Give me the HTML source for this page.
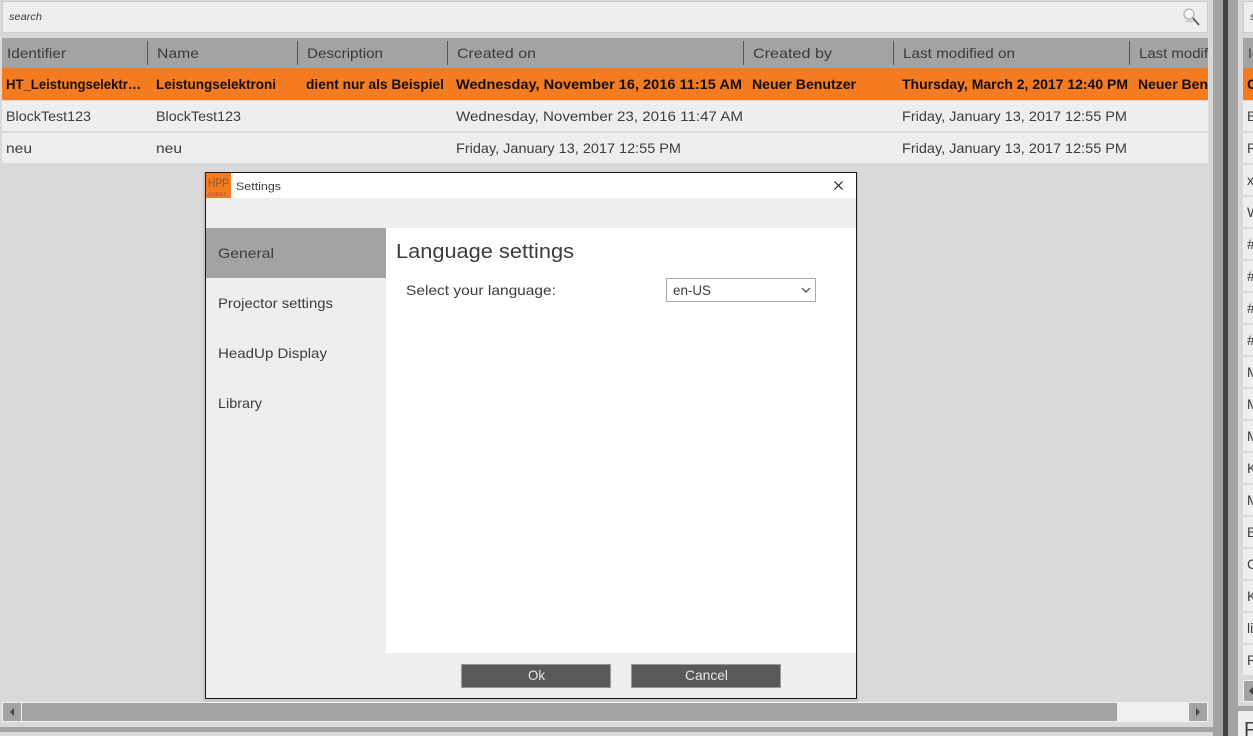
<!DOCTYPE html>
<html lang="en">
<head>
<meta charset="utf-8">
<title>Settings</title>
<style>
html,body{margin:0;padding:0;width:1253px;height:736px;overflow:hidden;background:#d9d9d9}
svg{display:block}
text{font-family:"Liberation Sans",sans-serif;font-size:14px;fill:#3c3c3c}
.b{font-weight:bold;fill:#111}
.h{fill:#3a3a3a}
</style>
</head>
<body>
<svg width="1253" height="736" viewBox="0 0 1253 736" xmlns="http://www.w3.org/2000/svg">
<rect width="1253" height="736" fill="#d9d9d9"/>

<!-- faint background texture -->
<g fill="none" stroke="#dcdcdc" stroke-width="1">
<path d="M1144 620L1213 697"/>
<path d="M885 175L960 320"/>
<path d="M110 168L195 195"/>
</g>

<!-- left search -->
<rect x="2.5" y="1.5" width="1205" height="31" fill="#eeeeee" stroke="#cccccc"/>
<text x="9" y="20" style="font-size:10px;font-style:italic" textLength="33" lengthAdjust="spacingAndGlyphs">search</text>
<ellipse cx="1190" cy="21" rx="5" ry="1.500" fill="#d0d0d0"/>
<circle cx="1189" cy="14" r="5" fill="#f6f6f6" stroke="#b0b0b0" stroke-width="1.200"/>
<path d="M1193 18L1199 25" stroke="#4a4a4a" stroke-width="1.600"/>

<!-- left header -->
<rect x="2" y="38" width="1206" height="30" fill="#a3a3a3"/>
<g stroke="#555" stroke-width="1">
<path d="M147.500 41V65M297.500 41V65M447.500 41V65M743.500 41V65M893.500 41V65M1129.500 41V65"/>
</g>
<text class="h" x="7" y="58" textLength="59" lengthAdjust="spacingAndGlyphs">Identifier</text>
<text class="h" x="157" y="58" textLength="42" lengthAdjust="spacingAndGlyphs">Name</text>
<text class="h" x="307" y="58" textLength="76" lengthAdjust="spacingAndGlyphs">Description</text>
<text class="h" x="457" y="58" textLength="79" lengthAdjust="spacingAndGlyphs">Created on</text>
<text class="h" x="753" y="58" textLength="79" lengthAdjust="spacingAndGlyphs">Created by</text>
<text class="h" x="903" y="58" textLength="112" lengthAdjust="spacingAndGlyphs">Last modified on</text>
<text class="h" x="1139" y="58" textLength="69" lengthAdjust="spacingAndGlyphs">Last modif</text>

<!-- selected row -->
<rect x="2" y="68" width="1206" height="32" fill="#f47b20"/>
<text class="b" x="6" y="89" textLength="135" lengthAdjust="spacingAndGlyphs">HT_Leistungselektr…</text>
<text class="b" x="156" y="89" textLength="120" lengthAdjust="spacingAndGlyphs">Leistungselektroni</text>
<text class="b" x="306" y="89" textLength="138" lengthAdjust="spacingAndGlyphs">dient nur als Beispiel</text>
<text class="b" x="456" y="89" textLength="286" lengthAdjust="spacingAndGlyphs">Wednesday, November 16, 2016 11:15 AM</text>
<text class="b" x="752" y="89" textLength="104" lengthAdjust="spacingAndGlyphs">Neuer Benutzer</text>
<text class="b" x="902" y="89" textLength="226" lengthAdjust="spacingAndGlyphs">Thursday, March 2, 2017 12:40 PM</text>
<text class="b" x="1138" y="89" textLength="70" lengthAdjust="spacingAndGlyphs">Neuer Ben</text>

<!-- rows -->
<rect x="2" y="101" width="1206" height="30" fill="#eeeeee"/>
<rect x="2" y="133" width="1206" height="30" fill="#eeeeee"/>
<text x="6" y="121" textLength="85" lengthAdjust="spacingAndGlyphs">BlockTest123</text>
<text x="156" y="121" textLength="85" lengthAdjust="spacingAndGlyphs">BlockTest123</text>
<text x="456" y="121" textLength="287" lengthAdjust="spacingAndGlyphs">Wednesday, November 23, 2016 11:47 AM</text>
<text x="902" y="121" textLength="225" lengthAdjust="spacingAndGlyphs">Friday, January 13, 2017 12:55 PM</text>
<text x="6" y="153" textLength="26" lengthAdjust="spacingAndGlyphs">neu</text>
<text x="156" y="153" textLength="26" lengthAdjust="spacingAndGlyphs">neu</text>
<text x="456" y="153" textLength="225" lengthAdjust="spacingAndGlyphs">Friday, January 13, 2017 12:55 PM</text>
<text x="902" y="153" textLength="225" lengthAdjust="spacingAndGlyphs">Friday, January 13, 2017 12:55 PM</text>

<!-- left scrollbar -->
<rect x="2" y="702" width="1206" height="20" fill="#f0f0f0"/>
<rect x="3" y="703" width="18" height="18" fill="#a3a3a3"/>
<rect x="22" y="703" width="1095" height="18" fill="#a3a3a3"/>
<rect x="1189" y="703" width="18" height="18" fill="#a3a3a3"/>
<path d="M10 712L14 708V716Z" fill="#444"/>
<path d="M1196 708L1200 712L1196 716Z" fill="#444"/>
<rect x="0" y="727" width="1213" height="5" fill="#a3a3a3"/>

<!-- splitter -->
<rect x="1213" y="0" width="10" height="736" fill="#a3a3a3"/>
<rect x="1223" y="0" width="5" height="736" fill="#444444"/>
<rect x="1228" y="0" width="10" height="736" fill="#a3a3a3"/>

<!-- right pane -->
<rect x="1243.500" y="1.500" width="12" height="31" fill="#eeeeee" stroke="#cccccc"/>
<text x="1250" y="20" style="font-size:10px;font-style:italic">s</text>
<rect x="1243" y="38" width="10" height="30" fill="#a3a3a3"/>
<text class="h" x="1248" y="58">Identifier</text>
<rect x="1243" y="68" width="10" height="32" fill="#f47b20"/>
<text class="b" x="1247" y="89">C</text>
<g fill="#eeeeee">
<rect x="1243" y="101" width="10" height="30"/><rect x="1243" y="133" width="10" height="30"/><rect x="1243" y="165" width="10" height="30"/><rect x="1243" y="197" width="10" height="30"/><rect x="1243" y="229" width="10" height="30"/><rect x="1243" y="261" width="10" height="30"/><rect x="1243" y="293" width="10" height="30"/><rect x="1243" y="325" width="10" height="30"/><rect x="1243" y="357" width="10" height="30"/><rect x="1243" y="389" width="10" height="30"/><rect x="1243" y="421" width="10" height="30"/><rect x="1243" y="453" width="10" height="30"/><rect x="1243" y="485" width="10" height="30"/><rect x="1243" y="517" width="10" height="30"/><rect x="1243" y="549" width="10" height="30"/><rect x="1243" y="581" width="10" height="30"/><rect x="1243" y="613" width="10" height="30"/><rect x="1243" y="645" width="10" height="30"/>
</g>
<text x="1247" y="121">B</text><text x="1247" y="153">R</text><text x="1247" y="185">x</text><text x="1247" y="217">W</text><text x="1247" y="249">#</text><text x="1247" y="281">#</text><text x="1247" y="313">#</text><text x="1247" y="345">#</text><text x="1247" y="377">M</text><text x="1247" y="409">M</text><text x="1247" y="441">M</text><text x="1247" y="473">K</text><text x="1247" y="505">M</text><text x="1247" y="537">B</text><text x="1247" y="569">C</text><text x="1247" y="601">K</text><text x="1247" y="633">li</text><text x="1247" y="665">R</text>
<rect x="1243" y="680" width="10" height="22" fill="#f0f0f0"/>
<rect x="1244" y="681" width="9" height="20" fill="#a3a3a3"/>
<path d="M1249 691L1253 687V695Z" fill="#444"/>
<rect x="1238" y="706" width="15" height="5" fill="#a3a3a3"/>
<rect x="1238" y="711" width="15" height="25" fill="#eeeeee"/>
<text x="1244" y="736" style="font-size:20px">P</text>

<!-- dialog -->
<rect x="203" y="172" width="655" height="530" fill="#a8a8a8" opacity=".35"/>
<rect x="205.500" y="172.500" width="651" height="526" fill="#eeeeee" stroke="#1a1a1a"/>
<rect x="206" y="173" width="650" height="25" fill="#ffffff"/>
<rect x="206" y="173" width="25" height="25" fill="#f47b20"/>
<text x="208" y="187" style="font-size:12px;fill:#8a5a30" textLength="21" lengthAdjust="spacingAndGlyphs">HPP</text>
<text x="208" y="196" style="font-size:6px;fill:#9a6030" textLength="18" lengthAdjust="spacingAndGlyphs">cutter</text>
<text x="236" y="190" style="font-size:11px" textLength="45" lengthAdjust="spacingAndGlyphs">Settings</text>
<path d="M834.500 181.500L842.500 189.500M842.500 181.500L834.500 189.500" stroke="#222" stroke-width="1.200"/>

<rect x="206" y="228" width="180" height="50" fill="#a3a3a3"/>
<rect x="386" y="228" width="470" height="425" fill="#ffffff"/>
<text x="218" y="258" textLength="56" lengthAdjust="spacingAndGlyphs">General</text>
<text x="218" y="308" textLength="115" lengthAdjust="spacingAndGlyphs">Projector settings</text>
<text x="218" y="358" textLength="109" lengthAdjust="spacingAndGlyphs">HeadUp Display</text>
<text x="218" y="408" textLength="44" lengthAdjust="spacingAndGlyphs">Library</text>

<text x="396" y="258" style="font-size:20px" textLength="178" lengthAdjust="spacingAndGlyphs">Language settings</text>
<text x="406" y="295" textLength="150" lengthAdjust="spacingAndGlyphs">Select your language:</text>
<rect x="666.500" y="278.500" width="149" height="23" fill="#ffffff" stroke="#a8a8a8"/>
<text x="673" y="295" textLength="38" lengthAdjust="spacingAndGlyphs">en-US</text>
<path d="M802 288L806 292L810 288" fill="none" stroke="#444" stroke-width="1.200"/>

<rect x="461.500" y="664.500" width="149" height="23" fill="#595959" stroke="#999999"/>
<rect x="631.500" y="664.500" width="149" height="23" fill="#595959" stroke="#999999"/>
<text x="528" y="680" style="fill:#e6e6e6" textLength="17" lengthAdjust="spacingAndGlyphs">Ok</text>
<text x="685" y="680" style="fill:#e6e6e6" textLength="43" lengthAdjust="spacingAndGlyphs">Cancel</text>
</svg>
</body>
</html>
